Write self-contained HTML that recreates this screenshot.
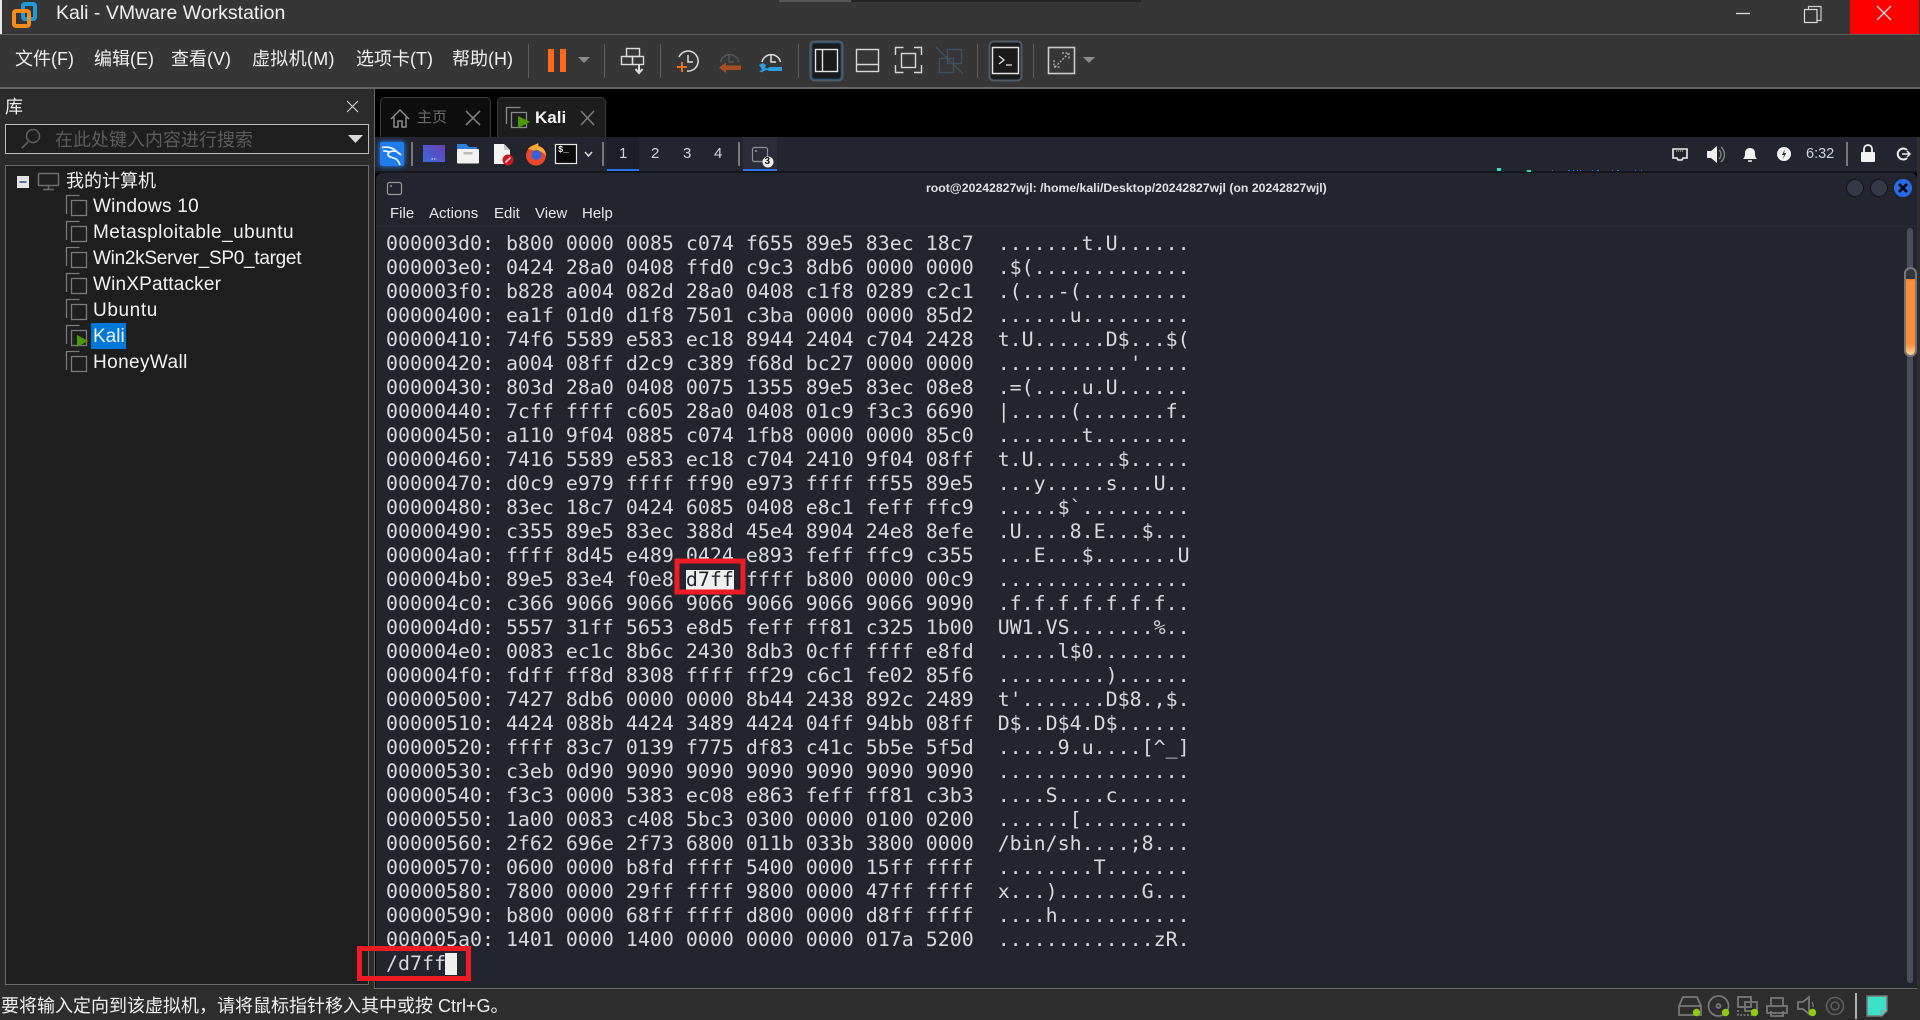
<!DOCTYPE html>
<html lang="zh"><head><meta charset="utf-8"><title>Kali - VMware Workstation</title>
<style>
html,body{margin:0;padding:0;background:#000;width:1920px;height:1020px;overflow:hidden}
body{position:relative;font-family:"Liberation Sans","Noto Sans CJK SC",sans-serif;color:#eee}
.b{position:absolute;box-sizing:border-box}
.t{position:absolute;white-space:pre;line-height:24px}
.m{font-size:18px;color:#f0f0f0;top:47px}
.i{font-size:19px;color:#f2f2f2;left:93px}
.f{font-size:15px;color:#e6e8ec;top:202px}
#term{position:absolute;left:386px;top:232px;margin:0;font:19.93px/24px "DejaVu Sans Mono","Liberation Mono",monospace;color:#d6d9de;white-space:pre;letter-spacing:0}
svg{position:absolute;left:0;top:0}
</style></head><body>
<div class="b" style="left:0;top:0;width:1920px;height:34px;background:#363636"></div>
<div class="b" style="left:0;top:0;width:2px;height:34px;background:#e8e8e8"></div>
<div class="b" style="left:779px;top:0;width:72px;height:2px;background:#555"></div>
<div class="b" style="left:851px;top:0;width:290px;height:2px;background:#242424"></div>
<div class="b" style="left:0;top:34px;width:1920px;height:1px;background:#5c5c5c"></div>
<div class="b" style="left:0;top:35px;width:1920px;height:52px;background:#363636"></div>
<div class="b" style="left:0;top:87px;width:1920px;height:2px;background:#666"></div>
<div class="b" style="left:1850px;top:0;width:69px;height:34px;background:#f00"></div>
<div class="b" style="left:0;top:89px;width:374px;height:900px;background:#2b2b2b"></div>
<div class="b" style="left:374px;top:89px;width:1px;height:900px;background:#666"></div>
<div class="b" style="left:5px;top:124px;width:364px;height:30px;border:1px solid #bdbdbd;background:#1e1e1e"></div>
<div class="b" style="left:5px;top:165px;width:364px;height:820px;border:1px solid #6a6a6a;background:#1e1e1e"></div>
<div class="b" style="left:91px;top:323px;width:35px;height:26px;background:#0078d7"></div>
<div class="b" style="left:0;top:989px;width:1920px;height:31px;background:#2d2d2d"></div>
<div class="b" style="left:380px;top:97px;width:111px;height:40px;background:#0d0d0d;border:1px solid #3a3a3a;border-bottom:0;border-radius:5px 5px 0 0"></div>
<div class="b" style="left:497px;top:97px;width:109px;height:40px;background:#1d1d1d;border:1px solid #3a3a3a;border-bottom:0;border-radius:5px 5px 0 0"></div>
<div class="b" style="left:375px;top:137px;width:1545px;height:35px;background:#22252e"></div>
<div class="b" style="left:607px;top:137px;width:32px;height:34px;background:#1b1e26"></div>
<div class="b" style="left:743px;top:137px;width:34px;height:34px;background:#2a2d37"></div>
<div class="b" style="left:607px;top:169px;width:32px;height:3px;background:#2a72f0"></div>
<div class="b" style="left:743px;top:169px;width:34px;height:3px;background:#2a72f0"></div>
<div class="b" style="left:375px;top:171px;width:1545px;height:2px;background:#14161c"></div>
<div class="b" style="left:376px;top:173px;width:1541px;height:815px;background:#22252e;border-radius:6px 6px 0 0"></div>
<div class="b" style="left:376px;top:226px;width:1541px;height:1px;background:#272a33"></div>
<div class="b" style="left:375px;top:988px;width:1545px;height:1px;background:#6a6a6a"></div>
<div class="b" style="left:1917px;top:137px;width:3px;height:852px;background:#2d2d2d"></div>
<div class="b" style="left:1497px;top:168px;width:4px;height:3px;background:#1ee6c8"></div>
<div class="b" style="left:1527px;top:170px;width:4px;height:2px;background:#1ee6c8"></div>
<div class="b" style="left:1907px;top:228px;width:6px;height:755px;background:#4a4d55;border-radius:3px"></div>
<div class="b" style="left:1904px;top:267px;width:13px;height:90px;border:2px solid #777;border-radius:7px;background:#33363e"></div>
<div class="b" style="left:1906px;top:279px;width:9px;height:76px;background:linear-gradient(#f27a22 0,#ff8c38 4%,#ff8c38 85%,#ffd9a0 100%);border-radius:0 0 5px 5px"></div>

<div class="t" style="left:56px;top:1px;font-size:19.5px;color:#f0f0f0">Kali - VMware Workstation</div>
<div class="t m" style="left:15px">文件(F)</div>
<div class="t m" style="left:94px">编辑(E)</div>
<div class="t m" style="left:171px">查看(V)</div>
<div class="t m" style="left:252px;letter-spacing:.3px">虚拟机(M)</div>
<div class="t m" style="left:356px">选项卡(T)</div>
<div class="t m" style="left:452px">帮助(H)</div>
<div class="t" style="left:5px;top:95px;font-size:18px;color:#eee">库</div>
<div class="t" style="left:55px;top:128px;font-size:18px;color:#5c5c5c">在此处键入内容进行搜索</div>
<div class="t" style="left:66px;top:169px;font-size:18px;color:#f0f0f0">我的计算机</div>
<div class="t i" style="top:195px;letter-spacing:.24px">Windows 10</div>
<div class="t i" style="top:221px;letter-spacing:.47px">Metasploitable_ubuntu</div>
<div class="t i" style="top:247px;letter-spacing:-.28px">Win2kServer_SP0_target</div>
<div class="t i" style="top:273px;letter-spacing:.19px">WinXPattacker</div>
<div class="t i" style="top:299px;letter-spacing:.6px">Ubuntu</div>
<div class="t i" style="top:325px">Kali</div>
<div class="t i" style="top:351px;letter-spacing:.4px">HoneyWall</div>
<div class="t" style="left:417px;top:106px;font-size:15px;color:#6a6a6a">主页</div>
<div class="t" style="left:535px;top:106px;font-size:17px;font-weight:bold;color:#f4f4f4">Kali</div>
<div class="t" style="left:619px;top:142px;font-size:15px;color:#cfd3da">1</div>
<div class="t" style="left:651px;top:142px;font-size:15px;color:#cfd3da">2</div>
<div class="t" style="left:683px;top:142px;font-size:15px;color:#cfd3da">3</div>
<div class="t" style="left:714px;top:142px;font-size:15px;color:#cfd3da">4</div>
<div class="t" style="left:1806px;top:142px;font-size:14.5px;color:#cfd3da">6:32</div>
<div class="t" style="left:926px;top:176px;font-size:12.25px;font-weight:bold;color:#dfe2e6">root@20242827wjl: /home/kali/Desktop/20242827wjl (on 20242827wjl)</div>
<div class="t f" style="left:390px">File</div>
<div class="t f" style="left:429px">Actions</div>
<div class="t f" style="left:494px">Edit</div>
<div class="t f" style="left:535px">View</div>
<div class="t f" style="left:582px">Help</div>
<div class="t" style="left:1px;top:994px;font-size:18px;color:#f0f0f0">要将输入定向到该虚拟机，请将鼠标指针移入其中或按 Ctrl+G。</div>

<div class="b" style="left:686px;top:570px;width:48px;height:20px;background:#f0f0f0"></div>
<div class="b" style="left:445px;top:953px;width:12px;height:22px;background:#f0f0f0"></div>
<pre id="term">000003d0: b800 0000 0085 c074 f655 89e5 83ec 18c7  .......t.U......
000003e0: 0424 28a0 0408 ffd0 c9c3 8db6 0000 0000  .$(.............
000003f0: b828 a004 082d 28a0 0408 c1f8 0289 c2c1  .(...-(.........
00000400: ea1f 01d0 d1f8 7501 c3ba 0000 0000 85d2  ......u.........
00000410: 74f6 5589 e583 ec18 8944 2404 c704 2428  t.U......D$...$(
00000420: a004 08ff d2c9 c389 f68d bc27 0000 0000  ...........'....
00000430: 803d 28a0 0408 0075 1355 89e5 83ec 08e8  .=(....u.U......
00000440: 7cff ffff c605 28a0 0408 01c9 f3c3 6690  |.....(.......f.
00000450: a110 9f04 0885 c074 1fb8 0000 0000 85c0  .......t........
00000460: 7416 5589 e583 ec18 c704 2410 9f04 08ff  t.U.......$.....
00000470: d0c9 e979 ffff ff90 e973 ffff ff55 89e5  ...y.....s...U..
00000480: 83ec 18c7 0424 6085 0408 e8c1 feff ffc9  .....$`.........
00000490: c355 89e5 83ec 388d 45e4 8904 24e8 8efe  .U....8.E...$...
000004a0: ffff 8d45 e489 0424 e893 feff ffc9 c355  ...E...$.......U
000004b0: 89e5 83e4 f0e8 <span style="color:#22252e">d7ff</span> ffff b800 0000 00c9  ................
000004c0: c366 9066 9066 9066 9066 9066 9066 9090  .f.f.f.f.f.f.f..
000004d0: 5557 31ff 5653 e8d5 feff ff81 c325 1b00  UW1.VS.......%..
000004e0: 0083 ec1c 8b6c 2430 8db3 0cff ffff e8fd  .....l$0........
000004f0: fdff ff8d 8308 ffff ff29 c6c1 fe02 85f6  .........)......
00000500: 7427 8db6 0000 0000 8b44 2438 892c 2489  t'.......D$8.,$.
00000510: 4424 088b 4424 3489 4424 04ff 94bb 08ff  D$..D$4.D$......
00000520: ffff 83c7 0139 f775 df83 c41c 5b5e 5f5d  .....9.u....[^_]
00000530: c3eb 0d90 9090 9090 9090 9090 9090 9090  ................
00000540: f3c3 0000 5383 ec08 e863 feff ff81 c3b3  ....S....c......
00000550: 1a00 0083 c408 5bc3 0300 0000 0100 0200  ......[.........
00000560: 2f62 696e 2f73 6800 011b 033b 3800 0000  /bin/sh....;8...
00000570: 0600 0000 b8fd ffff 5400 0000 15ff ffff  ........T.......
00000580: 7800 0000 29ff ffff 9800 0000 47ff ffff  x...).......G...
00000590: b800 0000 68ff ffff d800 0000 d8ff ffff  ....h...........
000005a0: 1401 0000 1400 0000 0000 0000 017a 5200  .............zR.
/d7ff</pre>

<svg width="1920" height="1020" viewBox="0 0 1920 1020" fill="none">
<defs><linearGradient id="bl" x1="0" y1="1" x2="1" y2="0"><stop offset="0" stop-color="#3a6ae0"/><stop offset="1" stop-color="#6a3fb0"/></linearGradient></defs>
<!-- logo -->
<rect x="23" y="4" width="12" height="15" rx="2" stroke="#1f9ad6" stroke-width="4"/>
<rect x="14" y="11" width="15" height="15" rx="2" stroke="#f58a1f" stroke-width="4"/>
<!-- window controls -->
<path d="M1736 13.5h14" stroke="#ddd" stroke-width="1.3"/>
<path d="M1808.500 9V6.500h12.500v14h-4" stroke="#ccc" stroke-width="1.2"/><rect x="1804.500" y="9.500" width="12.500" height="13" stroke="#ddd" stroke-width="1.2"/>
<path d="M1877 6l14 14M1891 6l-14 14" stroke="#fff" stroke-width="1.2"/>
<!-- separators -->
<path d="M528.500 44v34M604.500 44v34M660.500 44v34M798.500 44v34M977.500 44v34M1033.500 44v34" stroke="#5e5e5e"/>
<!-- pause -->
<rect x="548" y="49" width="6" height="23" fill="#ff6a1a"/><rect x="560" y="49" width="6" height="23" fill="#ff6a1a"/>
<path d="M578 57h12l-6 6zM1083 57h12l-6 6z" fill="#8c8c8c"/>
<!-- send ctrl alt del -->
<g stroke="#ddd" stroke-width="1.4"><rect x="626.500" y="48.500" width="13" height="8"/><rect x="621.500" y="56.500" width="11" height="8"/><rect x="632.500" y="56.500" width="11" height="8"/><path d="M639 65v7M635.500 69l3.500 4 3.500-4" stroke-width="2"/></g>
<!-- snapshot clocks -->
<g stroke="#ddd" stroke-width="1.500"><path d="M679 57A10 10 0 1 1 687 71"/><path d="M688 55v7h5"/></g>
<path d="M677 67h10M682 62v10" stroke="#e8702a" stroke-width="2"/>
<g stroke="#555" stroke-width="1.500"><path d="M720.500 62A9.500 9.500 0 0 1 739 62"/><path d="M729 55v7h5"/></g>
<path d="M719 67.500l7-5v3h15v4.500h-15v3z" fill="#a84e22"/>
<g stroke="#ddd" stroke-width="1.500"><path d="M762 62A9.500 9.500 0 0 1 780.500 62"/><path d="M771 55v7h5"/></g>
<path d="M759 65l4-2 3 2-1 3 3 .5 1-1.500h13v4h-13l-2-1-3 1-2 1.500-3-1.500 3-1-1-2z" fill="#2a9ce0"/>
<!-- view buttons -->
<rect x="810.500" y="41.500" width="32" height="39" rx="4" fill="#1a1a1a" stroke="#4f5c68" stroke-width="2"/>
<rect x="812" y="43" width="29" height="36" rx="3" stroke="#1c4a72"/>
<g stroke="#e4e4e4" stroke-width="1.4"><rect x="815.500" y="49.500" width="22" height="22"/><path d="M822.500 49.500v22"/></g>
<g stroke="#d8d8d8" stroke-width="1.4"><rect x="856.500" y="49.500" width="22" height="22"/><path d="M856.500 64.500h22"/></g>
<g stroke="#d8d8d8" stroke-width="1.4"><path d="M895.500 55v-7.500h8M914 47.500h7.500V55M921.500 65v7.500H914M903.500 72.500h-8V65"/><rect x="901.500" y="53.500" width="14" height="14"/></g>
<g stroke="#3f4f5e" stroke-width="1.4"><path d="M936 47l27 27"/><rect x="947.500" y="49.500" width="14" height="14"/><rect x="939.500" y="58.500" width="14" height="14"/></g>
<rect x="989.500" y="41.500" width="32" height="39" rx="4" fill="#1a1a1a" stroke="#4f5c68" stroke-width="2"/>
<rect x="992.500" y="47.500" width="26" height="26" stroke="#e4e4e4" stroke-width="1.500"/>
<path d="M999 56l5 4-5 4M1006 65h6" stroke="#e4e4e4" stroke-width="1.300"/>
<rect x="1048.500" y="47.500" width="26" height="26" stroke="#ccc" stroke-width="1.600"/>
<path d="M1055 67l13-13M1062 53h7v7M1054 60v7h7" stroke="#bbb" stroke-width="1.200" stroke-dasharray="2 1.500"/>
<!-- library -->
<path d="M347 101l11 11M358 101l-11 11" stroke="#ccc" stroke-width="1.200"/>
<circle cx="33" cy="136" r="6.500" stroke="#5c5c5c" stroke-width="1.600"/><path d="M28 142l-6 6" stroke="#5c5c5c" stroke-width="1.800"/>
<path d="M348 135h15l-7.500 8z" fill="#d8d8d8"/>
<rect x="17" y="176" width="12" height="12" fill="#e4e4e4"/><path d="M19.500 182h7" stroke="#1f3a8a" stroke-width="1.400"/>
<g stroke="#6e6e6e" stroke-width="1.500"><rect x="38.500" y="173.500" width="20" height="12" rx="1"/><path d="M48.500 186v3M43 189.500h11"/></g>
<g stroke="#7a7a7a" stroke-width="1.300">
<path d="M66.500 214v-18.500h13"/><rect x="71.500" y="200.500" width="15" height="15"/>
<path d="M66.500 240v-18.500h13"/><rect x="71.500" y="226.500" width="15" height="15"/>
<path d="M66.500 266v-18.500h13"/><rect x="71.500" y="252.500" width="15" height="15"/>
<path d="M66.500 292v-18.500h13"/><rect x="71.500" y="278.500" width="15" height="15"/>
<path d="M66.500 318v-18.500h13"/><rect x="71.500" y="304.500" width="15" height="15"/>
<path d="M66.500 344v-18.500h13"/><rect x="71.500" y="330.500" width="15" height="15"/>
<path d="M66.500 370v-18.500h13"/><rect x="71.500" y="356.500" width="15" height="15"/>
</g>
<path d="M77 335l11 6-11 6z" fill="#4a9a08"/>
<!-- tabs -->
<path d="M391 119l9-9 9 9M394 117v10h4v-6h4v6h4v-10" stroke="#8c8c8c" stroke-width="1.500"/>
<path d="M466 111l14 14M480 111l-14 14M581 111l13 14M594 111l-13 14" stroke="#7a7a7a" stroke-width="1.600"/>
<g stroke="#8a8a8a" stroke-width="1.300"><path d="M506.500 124v-16.500h14"/><rect x="511.500" y="112.500" width="15" height="15"/></g>
<path d="M518 116l12 6-12 6z" fill="#4a9a08"/>
<!-- kali panel -->
<rect x="380" y="142" width="24" height="24" rx="2" fill="#1e7cf0" style="filter:drop-shadow(0 0 3px #2a8cff)"/>
<path d="M382 147.500c5-1 11 0 14 3.500l5 4M396 151c-3 0-8 0-8 3.500 0 3 5 2.500 8 4.500 2 1.500 3 3 4 6M383 151c3-.500 4 .500 6 1" stroke="#fff" stroke-width="1.600"/>
<path d="M412 142v24M603 142v24M739 142v24M1847 142v24" stroke="#8a8c90" stroke-width="1.600"/>
<rect x="423" y="145" width="22" height="17" fill="url(#bl)"/><path d="M431.500 159h5" stroke="#ddd" stroke-dasharray="1.500 .8"/>
<path d="M457 149v-5h9l3 3h8v2z" fill="#2f7fe0"/><rect x="457" y="149" width="22" height="14.500" rx="1" fill="#f2f2f2"/><rect x="463.500" y="152" width="9" height="2.500" fill="#bbb"/>
<path d="M494 144h10l6 6v14h-16z" fill="#f4f4f4"/><path d="M504 144v6h6" fill="#ccc"/><circle cx="508" cy="160" r="5.500" fill="#c81a22"/><path d="M505.500 162.500l5-5" stroke="#fff" stroke-width="1.300"/>
<circle cx="536" cy="155.500" r="10" fill="#e8472a"/><path d="M528 149c3-4 8-4 10-6 1 2 0 3 0 3 5 1 8 5 8 10-2-3-6-6-10-5z" fill="#ffa92e"/><circle cx="536.500" cy="155" r="5" fill="#3a5fd8"/>
<rect x="555.500" y="144.500" width="21" height="19" fill="#0a0a0a" stroke="#e8e8e8" stroke-width="1.200"/>
<path d="M585 152l3.500 4 3.500-4" stroke="#ddd" stroke-width="1.500"/>
<rect x="752.500" y="147.500" width="15" height="14" rx="2" stroke="#8e8e8e" stroke-width="1.200"/><path d="M755 151h2" stroke="#ccc"/>
<circle cx="768" cy="162" r="5.500" fill="#f0f0f0"/>
<!-- tray -->
<path d="M1673 149h14v9h-4l-1 2h-4l-1-2h-4z" stroke="#eee" stroke-width="1.600"/><path d="M1676 151h8" stroke="#eee" stroke-dasharray="1 1"/>
<path d="M1707 151h4l6-5v17l-6-5h-4z" fill="#eee"/><path d="M1719 150a6 6 0 0 1 0 9M1721 147a10 10 0 0 1 0 15" stroke="#888" stroke-width="1.300"/>
<path d="M1743 159c2-2 2-4 2-6 0-3 2-5 5-5s5 2 5 5c0 2 0 4 2 6z" fill="#f2f2f2"/><path d="M1748 161h4" stroke="#f2f2f2" stroke-width="1.500"/>
<circle cx="1784" cy="154" r="7" fill="#f2f2f2"/><path d="M1785 149l-3 6h2l-1 4 3-6h-2z" fill="#22252e"/>
<rect x="1861" y="152" width="14" height="10" rx="1" fill="#f2f2f2"/><path d="M1864 152v-3a4 4 0 0 1 8 0v3" stroke="#f2f2f2" stroke-width="1.800"/>
<path d="M1907 150a5.500 5.500 0 1 0 0 8" stroke="#eee" stroke-width="2"/><path d="M1902 154h8M1907 151l3 3-3 3" stroke="#eee" stroke-width="1.500"/>
<path d="M1552 170.500h1M1568 170.500h2M1573 170.500h1M1577 170.500h1M1580 170.500h1M1592 170.500h1M1597 170.500h2M1612 170.500h1M1617 170.500h2M1635 170.500h1M1641 170.500h1" stroke="#2a72f0"/>
<!-- terminal title -->
<rect x="387.500" y="182.500" width="14" height="12" rx="2" stroke="#999" stroke-width="1.200"/><path d="M390 186h2" stroke="#ccc"/>
<circle cx="1855" cy="188" r="8.500" fill="#333846" stroke="#14161c"/><circle cx="1879" cy="188" r="8.500" fill="#333846" stroke="#14161c"/>
<circle cx="1903" cy="188" r="9" fill="#2a6ae8"/><path d="M1899 184l8 8M1907 184l-8 8" stroke="#05080f" stroke-width="2.600"/>
<!-- red annotations -->
<rect x="677" y="561" width="66" height="31" stroke="#ed1c24" stroke-width="5"/>
<rect x="359.500" y="948.500" width="109" height="30" stroke="#ed1c24" stroke-width="5"/>
<!-- status icons -->
<g stroke="#777" stroke-width="1.800">
<path d="M1679 1006l4-9h14l4 9v9h-22zM1679 1006h22"/>
<circle cx="1718.500" cy="1006" r="10"/><circle cx="1718.500" cy="1006" r="2"/>
<rect x="1738" y="997" width="13" height="10"/><rect x="1745" y="1002" width="12" height="9"/><path d="M1738 1010v5h14" stroke-dasharray="2 1.500"/>
<path d="M1767 1006h20v7h-20zM1771 1006v-8h12v8M1771 1011v5h12v-5"/>
<path d="M1798 1002h5l6-5v17l-6-5h-5z"/><path d="M1812 1002a7 7 0 0 1 1 5" stroke-width="1.300"/>
</g>
<g stroke="#5e5e5e" stroke-width="1.600"><circle cx="1835" cy="1006" r="8.500"/><circle cx="1835" cy="1006" r="4"/></g>
<circle cx="1696.500" cy="1012.500" r="3.700" fill="#8ecc10"/><circle cx="1725.500" cy="1012.500" r="3.700" fill="#8ecc10"/><circle cx="1754.500" cy="1012.500" r="3.700" fill="#8ecc10"/><circle cx="1812.500" cy="1012.500" r="3.700" fill="#8ecc10"/>
<path d="M1856 993v26" stroke="#ddd" stroke-width="1.500"/>
<path d="M1867 996h20v15l-5 5h-15z" fill="#3ee0c8" stroke="#777" stroke-width="1.500"/><path d="M1881 1016v-5h6" stroke="#999"/>
</svg>
<div class="t" style="left:764.500px;top:150px;font-size:10px;font-weight:bold;color:#111">3</div>
<div class="t" style="left:558px;top:143px;font:bold 9px/14px 'Liberation Mono',monospace;color:#eee">$_</div>
</body></html>
